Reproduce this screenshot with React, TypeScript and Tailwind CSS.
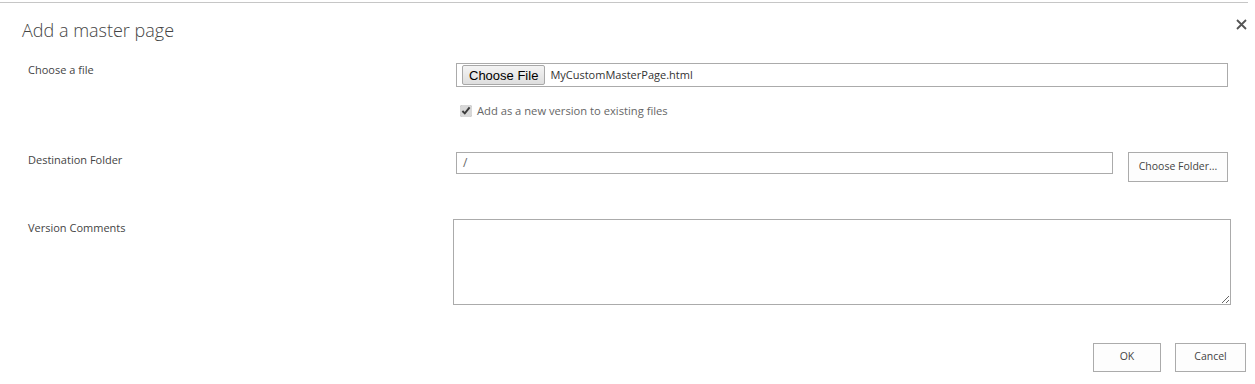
import React from 'react';

const font = { fontFamily: '"Open Sans", "Noto Sans", sans-serif' };

const Label = ({ children }: { children: React.ReactNode }) => (
    <div className="w-[428px] shrink-0 pl-[28px] text-[11px] leading-[14px] text-[#444]">{children}</div>
);

const App = () => {
    return (
        <div className="w-[1255px] h-[384px] bg-white relative" style={font}>
            {/* top rule */}
            <div className="h-[2px]" />
            <div className="h-px w-[1248px] bg-[#c6c6c6]" />

            {/* Header */}
            <div className="flex items-start justify-between pl-[22px] pr-[8px] pt-[14px]">
                <h1 className="text-[18px] font-light text-[#444] leading-[26px]">Add a master page</h1>
                <button className="mt-[2px]">
                    <svg width="11" height="11" viewBox="0 0 11 11">
                        <path d="M1 1 L10 10 M10 1 L1 10" stroke="#555" strokeWidth="1.8" />
                    </svg>
                </button>
            </div>

            {/* Choose a file */}
            <div className="flex mt-[20px]">
                <Label>Choose a file</Label>
                <div className="ml-[28px] flex-1 mr-[27px]">
                    <div className="h-[24px] border border-[#ababab] flex items-center pl-[5px]">
                        <button
                            className="h-[20px] px-[6px] border border-[#a8a8a8] rounded-[2px] bg-gradient-to-b from-[#f4f4f4] to-[#dedede] text-[13px] text-black leading-none"
                            style={{ fontFamily: '"Liberation Sans", Arial, sans-serif' }}
                        >
                            Choose File
                        </button>
                        <span className="ml-[5px] text-[11px] text-[#333]">MyCustomMasterPage.html</span>
                    </div>
                    <label className="flex items-center mt-[16px] ml-[4px] text-[11.2px] text-[#666]">
                        <input type="checkbox" checked readOnly className="w-[12px] h-[12px] mr-[5px] accent-[#d8d8d8]" />
                        Add as a new version to existing files
                    </label>
                </div>
            </div>

            {/* Destination Folder */}
            <div className="flex mt-[32px]">
                <Label><div className="pt-[1px]">Destination Folder</div></Label>
                <div className="ml-[28px] flex-1 mr-[27px] flex items-start gap-[15px]">
                    <div className="flex-1 h-[22px] border border-[#ababab] flex items-center pl-[6px] text-[12px] text-[#666]">/</div>
                    <button className="w-[100px] h-[30px] border border-[#ababab] bg-[#fdfdfd] text-[10.5px] text-[#444]">
                        Choose Folder...
                    </button>
                </div>
            </div>

            {/* Version Comments */}
            <div className="flex mt-[37px]">
                <Label><div className="pt-[2px]">Version Comments</div></Label>
                <div className="ml-[25px] flex-1 mr-[24px]">
                    <textarea className="block w-full h-[86px] border border-[#ababab] outline-none resize-y" />
                </div>
            </div>

            {/* Footer */}
            <div className="flex justify-end gap-[14px] mt-[38px] pr-[9px]">
                <button className="w-[68px] h-[29px] border border-[#ababab] bg-[#fdfdfd] text-[10.5px] text-[#444]">OK</button>
                <button className="w-[71px] h-[29px] border border-[#ababab] bg-[#fdfdfd] text-[10.5px] text-[#444]">Cancel</button>
            </div>
        </div>
    );
};

export default App;
